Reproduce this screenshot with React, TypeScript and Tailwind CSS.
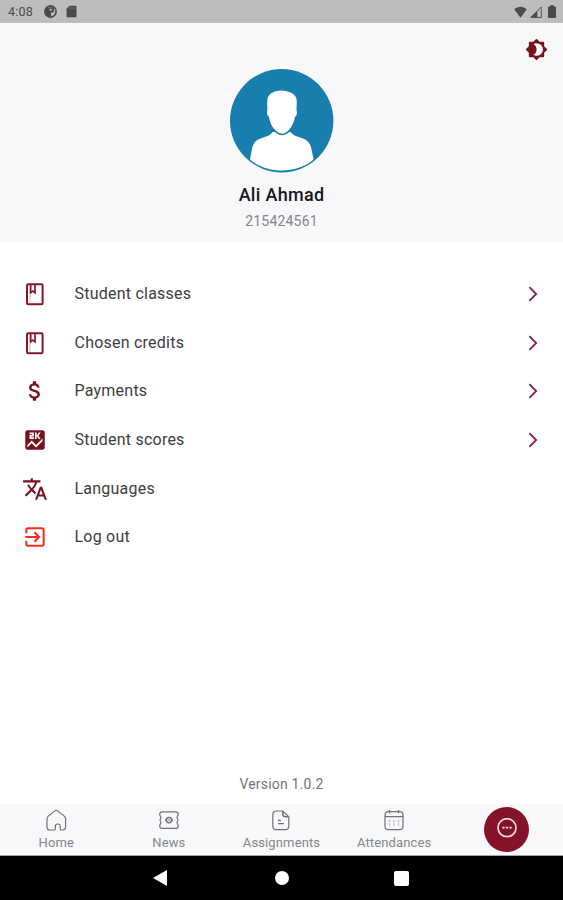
import React from "react";
import { MdAttachMoney, MdScore, MdTranslate } from "react-icons/md";

const BrightnessIcon = () => (
  <svg width="23" height="23" viewBox="0 0 24 24">
    <path
      d="M20 8.700V5q0-1-1-1h-3.700L12.700 1.300q-.7-.7-1.400 0L8.700 4H5Q4 4 4 5v3.700l-2.700 2.600q-.7.7 0 1.400L4 15.300V19q0 1 1 1h3.700l2.600 2.700q.7.7 1.400 0l2.600-2.700H19q1 0 1-1v-3.700l2.700-2.600q.7-.7 0-1.400z"
      fill="#78121f"
    />
    <path
      d="M8.800 6.300C9.800 5.700 11 5.500 12.200 5.500a6.500 6.500 0 0 1 0 13c-1.200 0-2.400-.2-3.400-.8 2.100-1.100 3.300-3.200 3.300-5.700s-1.200-4.600-3.300-5.700z"
      fill="#fff"
    />
  </svg>
);

const BookIcon = () => (
  <svg width="20" height="24" viewBox="0 0 20 24" fill="none" stroke="#86182a">
    <rect x="2" y="2.200" width="15.600" height="20" rx="1.200" strokeWidth="2" />
    <path d="M5 3v18.400" strokeWidth="0.800" opacity="0.400" />
    <path d="M5.700 2.500v8.300l2.100-1.700 2.200 1.700V2.500" strokeWidth="1.700" />
  </svg>
);

const LogoutIcon = () => (
  <svg width="26" height="26" viewBox="0 0 24 24" fill="none" stroke="#ee3124" strokeWidth="1.900">
    <path d="M4 8.500V5.500Q4 4 5.500 4h13Q20 4 20 5.500v13q0 1.500-1.500 1.500h-13Q4 20 4 18.500v-3" />
    <path d="M3 12h12.500M11.500 7.700l4.300 4.300-4.300 4.300" />
  </svg>
);

const ChevronIcon = () => (
  <svg width="10" height="16" viewBox="0 0 10 16" fill="none">
    <path d="M1.400 1.200 8.200 8l-6.800 6.800" stroke="#87233a" strokeWidth="1.800" />
  </svg>
);

const HomeIcon = () => (
  <svg width="22" height="22" viewBox="0 0 22 22" fill="none" stroke="#707276" strokeWidth="1.200">
    <path d="M2 9.900c0-1.200.4-2 1.300-2.800l6.300-5c1-.8 2.400-.8 3.400 0l6.300 5c.9.800 1.300 1.600 1.300 2.800v8.100c0 2-1 3-2.800 3h-1.100c-1 0-1.500-.6-1.500-1.600v-2.200c0-1.500-.7-2.200-2-2.200h-.8c-1.300 0-2 .7-2 2.200v2.200c0 1-.5 1.600-1.500 1.600H4.800c-1.800 0-2.800-1-2.800-3z" />
  </svg>
);

const NewsIcon = () => (
  <svg width="22" height="22" viewBox="0 0 22 22" fill="none" stroke="#707276" strokeWidth="1.200">
    <path d="M4.500 2.800h13c1.900 0 2.800.9 2.800 2.500 0 .9-.2 1.300-.7 1.900-.8 1-.8 1.900 0 2.800.5.700.5 1.500 0 2.200-.8.900-.8 1.800 0 2.800.5.600.7 1 .7 1.900 0 1.600-.9 2.500-2.800 2.500h-13c-1.900 0-2.800-.9-2.800-2.500 0-.9.200-1.300.7-1.900.8-1 .8-1.900 0-2.800-.5-.7-.5-1.500 0-2.200.8-.9.8-1.800 0-2.800-.5-.6-.7-1-.7-1.900 0-1.600.9-2.500 2.800-2.500z" />
    <circle cx="11" cy="11.100" r="2.700" strokeWidth="1.500" />
    <path d="M10.300 11.100h1.400M7 11.100h1.200M13.800 11.100H15" />
  </svg>
);

const AssignmentIcon = () => (
  <svg width="22" height="22" viewBox="0 0 22 22" fill="none" stroke="#707276" strokeWidth="1.200">
    <path d="M12.800 2H6.500C4.100 2 2.800 3.400 2.800 5.700v11.200c0 2.400 1.300 3.700 3.700 3.700h8.600c2.400 0 3.700-1.300 3.700-3.700V7.800z" />
    <path d="M12.800 2v3c0 1.900 1 2.800 2.800 2.800h3.200" strokeWidth="1.500" />
    <path d="M8 11.500h2.800M8 14.600h6" strokeWidth="1.300" />
  </svg>
);

const CalendarIcon = () => (
  <svg width="22" height="22" viewBox="0 0 22 22" fill="none" stroke="#707276" strokeWidth="1.200">
    <rect x="2" y="2.700" width="18" height="18" rx="3.500" />
    <path d="M2 7.600h18M6.500 1v3.200M15.500 1v3.200" strokeWidth="1.300" />
    <path d="M6.500 10.700v6M11 10.700v6M15.500 10.700v6" strokeDasharray="2.500 1" opacity="0.450" />
  </svg>
);

const Avatar = () => (
  <svg width="104" height="104" viewBox="0 0 104 104">
    <circle cx="51.700" cy="51.700" r="51.700" fill="#187eae" />
    {/* shoulders */}
    <path
      fill="#fff"
      d="M42.500 63c-1.500 2.200-3 3.300-5.500 4.300l-5 1.600c-6.500 2-8.800 5.500-10 11L20 90.500C29 98 40 101.500 51.700 101.500S75 98 83.500 90.500l-2-10.600c-1.200-5.500-3.500-9-10-11l-5-1.600c-2.500-1-4.500-2.300-6-4.300z"
    />
    {/* head */}
    <path
      fill="#fff"
      stroke="#187eae"
      strokeWidth="1.600"
      d="M51.500 20.700c-4.500-.4-8 1-10.800 3-3.500 2.500-4.500 5-4.300 9.400l.2 8c-.9 2.400-.4 6 1.700 7.400 1 7.500 3.700 10.500 6.800 13.500 2.200 2.200 4.200 3.500 7 3.500s4.800-1.300 6.900-3.500c3.100-3.500 5.700-6.500 6.600-13.500 2-1.600 2.500-5 1.700-7.400l.3-8c.1-6-3.100-9.300-8.100-10.900-2.700-1-5-1.400-8-1.500z"
    />
  </svg>
);

const menuItems = [
  { label: "Student classes", icon: <BookIcon />, arrow: true },
  { label: "Chosen credits", icon: <BookIcon />, arrow: true },
  { label: "Payments", icon: <MdAttachMoney size={26} />, arrow: true },
  { label: "Student scores", icon: <MdScore size={26} />, arrow: true },
  { label: "Languages", icon: <MdTranslate size={26} />, arrow: false },
  { label: "Log out", icon: <LogoutIcon />, arrow: false },
];

const tabs = [
  { label: "Home", icon: <HomeIcon /> },
  { label: "News", icon: <NewsIcon /> },
  { label: "Assignments", icon: <AssignmentIcon /> },
  { label: "Attendances", icon: <CalendarIcon /> },
];

const StatusBar = () => (
  <div className="flex h-[23px] items-center justify-between bg-[#bdbdbd] pl-2 pr-[7px] text-[#4a4a4a]">
    <div className="flex items-center">
      <span className="w-9 pt-px text-[12.5px] leading-none tracking-[0.200px]">4:08</span>
      <svg width="13" height="13" viewBox="0 0 13 13">
        <circle cx="6.500" cy="6.500" r="5.600" fill="none" stroke="currentColor" strokeWidth="1.600" />
        <path d="M1 4 3.500 1.500 5 3v9L2.500 10.500 1 8z" fill="currentColor" />
        <path d="M5 2.200h3.500q1.500 0 1.500 1.600v2q0 1.600-1.500 1.600H7v4H5z" fill="currentColor" />
        <path d="M5.600 3.800h2.200v1.800H5.600z" fill="#bdbdbd" />
      </svg>
      <svg className="ml-[9px]" width="11" height="13" viewBox="0 0 11 13">
        <path d="M3.500.700H9.500q1 0 1 1v9.600q0 1-1 1h-8q-1 0-1-1V3.700z" fill="currentColor" />
        <path d="M4 2v2M6 2v2M8 2v2" stroke="#8a8a8a" strokeWidth=".7" />
      </svg>
    </div>
    <div className="flex items-center">
      <svg width="13" height="12" viewBox="0 0 13 12">
        <path d="M6.500 11.800.200 3.300C3.800-.1 9.200-.1 12.800 3.300z" fill="currentColor" />
      </svg>
      <svg className="ml-[3px]" width="12" height="12" viewBox="0 0 12 12">
        <path d="M.900 11.400 11.300.900v10.500z" fill="none" stroke="currentColor" strokeWidth=".9" />
        <path d="M.500 11.600 7.300 4.800v6.800z" fill="currentColor" />
      </svg>
      <svg className="ml-[6px]" width="8" height="13" viewBox="0 0 8 13">
        <path d="M2.500 0h3v1.500H7q1 0 1 1V12q0 1-1 1H1q-1 0-1-1V2.500q0-1 1-1h1.500z" fill="currentColor" />
      </svg>
    </div>
  </div>
);

export default function App() {
  return (
    <div className="flex h-[900px] w-[563px] flex-col overflow-hidden bg-white font-['Roboto',sans-serif]">
      <StatusBar />

      <header className="flex h-[219px] flex-col items-center bg-[#f8f8fa]">
        <div className="flex h-[45.5px] w-full justify-end pr-[15px] pt-[15px]">
          <BrightnessIcon />
        </div>
        <Avatar />
        <h1 className="mt-[10px] text-[18px] font-medium leading-6 tracking-[0.300px] text-[#17171a]">
          Ali Ahmad
        </h1>
        <p className="mt-[6px] text-[14px] leading-4 tracking-[0.200px] text-[#85868a]">215424561</p>
      </header>

      <main className="flex flex-1 flex-col pt-[28px]">
        {menuItems.map((item) => (
          <div key={item.label} className="flex h-[48.6px] items-center pl-[21px] pr-[25px]">
            <div className="flex w-[27px] justify-center text-[#78121f]">{item.icon}</div>
            <span className="ml-[26.5px] flex-1 text-[16px] leading-5 tracking-[0.230px] text-[#3d3d40]">
              {item.label}
            </span>
            {item.arrow && <ChevronIcon />}
          </div>
        ))}
        <p className="mb-[10px] mt-auto text-center text-[14px] leading-5 tracking-[0.200px] text-[#747477]">
          Version 1.0.2
        </p>
      </main>

      <nav className="flex h-[52px] border-b border-[#a4a5a7] bg-[#f8f8fa]">
        {tabs.map((tab) => (
          <div key={tab.label} className="flex flex-1 flex-col items-center pt-[5px]">
            {tab.icon}
            <span className="mt-[4px] text-[13px] leading-4 tracking-[0.130px] text-[#85868a]">
              {tab.label}
            </span>
          </div>
        ))}
        <div className="flex flex-1 justify-center pt-[3px]">
          <div className="flex h-[45px] w-[45px] justify-center rounded-full bg-[#84132a] pt-[11px]">
            <svg width="22" height="22" viewBox="0 0 22 22" fill="none" stroke="#f6dfe1">
              <circle cx="11" cy="9.700" r="9" strokeWidth="1.700" />
              <path d="M6.300 9.700h2.300M9.800 9.700h2.400M13.400 9.700h2.300" strokeWidth="1.800" />
            </svg>
          </div>
        </div>
      </nav>

      <div className="flex h-[44px] items-center bg-black pl-[153px]">
        <svg width="14" height="16" viewBox="0 0 14 16">
          <path d="M14 0v16L0 8z" fill="#fff" />
        </svg>
        <div className="ml-[108px] h-[14px] w-[14px] rounded-full bg-white" />
        <div className="ml-[105px] h-[15px] w-[15px] rounded-[2px] bg-white" />
      </div>
    </div>
  );
}
